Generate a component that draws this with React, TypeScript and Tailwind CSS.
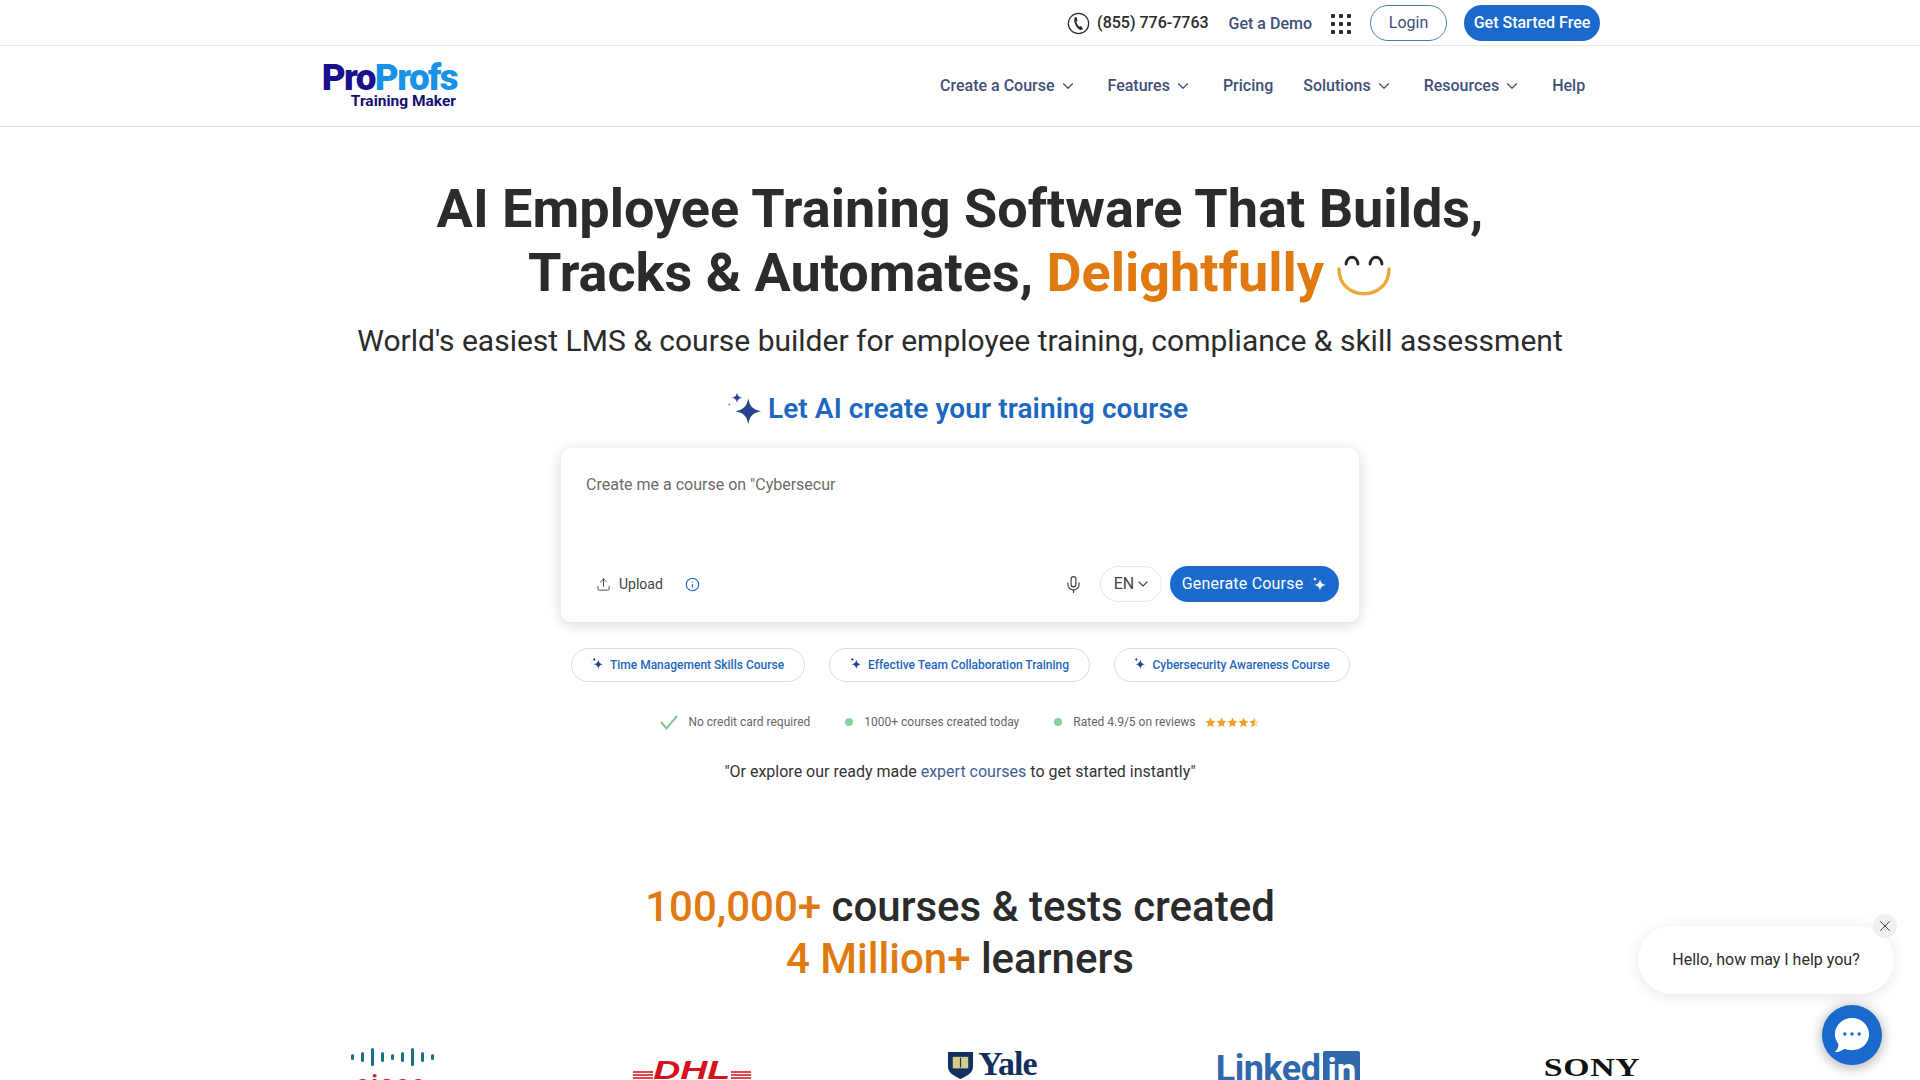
import { ChevronDown, Info, Mic, Upload, X } from "lucide-react";

const navItems = [
  { label: "Create a Course", menu: true, className: "mr-[31px]" },
  { label: "Features", menu: true, className: "mr-[31px]" },
  { label: "Pricing", menu: false, className: "mr-[30px]" },
  { label: "Solutions", menu: true, className: "mr-[31px]" },
  { label: "Resources", menu: true, className: "mr-[31px]" },
  { label: "Help", menu: false, className: "" },
];

function Sparkle({ className }: { className?: string }) {
  return (
    <svg viewBox="0 0 24 24" className={className} fill="currentColor">
      <path d="M13.5 5 C14.6 10.4 16.6 12.4 22 13.5 C16.6 14.6 14.6 16.6 13.5 22 C12.4 16.6 10.4 14.6 5 13.5 C10.4 12.4 12.4 10.4 13.5 5 Z" />
      <path d="M6 1 C6.4 3.2 7.3 4.1 9.5 4.5 C7.3 4.9 6.4 5.8 6 8 C5.6 5.8 4.7 4.9 2.5 4.5 C4.7 4.1 5.6 3.2 6 1 Z" />
      <circle cx="0.8" cy="9" r="0.5" />
    </svg>
  );
}

function PhoneIcon() {
  return (
    <svg viewBox="0 0 24 24" className="h-[23px] w-[23px] text-[#2b2b2b]" fill="none">
      <circle cx="12" cy="12" r="10.6" stroke="currentColor" strokeWidth="1.3" />
      <path
        d="M8 5.8 L10 5.3 L11 9 L9.7 10 C10 12 11.4 14.3 13 15.4 L14.5 14.5 L16.8 17.4 L15.3 18.6 C13.8 19.5 11.6 18 9.9 15.5 C8 12.8 6.8 8.4 8 5.8 Z"
        fill="currentColor"
      />
    </svg>
  );
}

function AppsGrid() {
  return (
    <div className="grid grid-cols-3 gap-[4px]">
      {Array.from({ length: 9 }).map((_, i) => (
        <span key={i} className="h-[4px] w-[4px] rounded-[1px] bg-[#2b2b2b]" />
      ))}
    </div>
  );
}

function Smile() {
  return (
    <svg viewBox="0 0 56 46" className="ml-[12px] mt-[2px] h-[46px] w-[56px]" fill="none" strokeLinecap="round">
      <path d="M3 18 C3 51 53 51 53 18" stroke="#eba83a" strokeWidth="3.4" />
      <path d="M10 13 C11 4 21 4 22 13" stroke="#222" strokeWidth="2.8" />
      <path d="M34 13 C35 4 45 4 46 13" stroke="#222" strokeWidth="2.8" />
    </svg>
  );
}

function Star({ half }: { half?: boolean }) {
  const shape = "M6 .6 L7.6 4.1 L11.4 4.5 L8.6 7.1 L9.4 10.9 L6 9 L2.6 10.9 L3.4 7.1 L.6 4.5 L4.4 4.1 Z";
  return (
    <svg viewBox="0 0 12 12" className="h-[11px] w-[11px]">
      <path d={shape} fill={half ? "#f6dcae" : "#f0a024"} />
      {half && <path d="M6 .6 L4.4 4.1 L.6 4.5 L3.4 7.1 L2.6 10.9 L6 9 Z" fill="#f0a024" />}
    </svg>
  );
}

function Stars() {
  return (
    <div className="ml-[9px] flex">
      <Star />
      <Star />
      <Star />
      <Star />
      <Star half />
    </div>
  );
}

function Chip({ label, className }: { label: string; className: string }) {
  return (
    <div
      className={`flex h-[34px] items-center justify-center gap-[6px] rounded-full border border-[#d9dce0] bg-white text-[12px] font-medium text-[#1d67c0] ${className}`}
    >
      <Sparkle className="mb-[3px] h-[13px] w-[13px] text-[#25438f]" />
      {label}
    </div>
  );
}

function CiscoLogo() {
  const bars = [6, 10, 18, 10, 6, 10, 18, 10, 6];
  return (
    <div className="flex flex-col items-center">
      <div className="flex h-[18px] items-center gap-[7px]">
        {bars.map((h, i) => (
          <span key={i} style={{ height: h }} className="w-[3px] rounded-full bg-[#1c6f86]" />
        ))}
      </div>
      <span className="mt-[4px] text-[24px] font-bold leading-[28px] tracking-[3px] text-[#c8202f]">cisco</span>
    </div>
  );
}

function Stripes() {
  return (
    <div className="mb-[4px] flex w-[20px] flex-col gap-[1px]">
      <span className="h-[2px] bg-[#e0474d]" />
      <span className="h-[2px] bg-[#e0474d]" />
      <span className="h-[2px] bg-[#e0474d]" />
    </div>
  );
}

function DhlLogo() {
  return (
    <div className="mt-[9px] flex h-[26px] items-end self-start">
      <Stripes />
      <div className="flex w-[78px] justify-center">
        <span className="font-['Liberation_Sans',sans-serif] text-[25px] font-bold italic leading-[26px] text-[#d5111b] [transform:scaleX(1.5)]">
          DHL
        </span>
      </div>
      <Stripes />
    </div>
  );
}

function YaleLogo() {
  return (
    <div className="flex items-start gap-[4px]">
      <svg viewBox="0 0 28 30" className="mt-[3px] h-[29px] w-[27px]">
        <path d="M1 1 H27 V16 C27 23 20 26 14 29 C8 26 1 23 1 16 Z" fill="#12305f" />
        <rect x="6" y="6" width="16" height="12" fill="#d6c98a" />
        <path d="M14 7 V17" stroke="#12305f" strokeWidth="1.2" />
      </svg>
      <span className="font-['Liberation_Serif',serif] text-[34px] font-bold leading-[32px] tracking-[-1px] text-[#12305f]">
        Yale
      </span>
    </div>
  );
}

function LinkedinLogo() {
  return (
    <div className="mr-[8px] mt-[1px] flex items-start gap-[3px]">
      <span className="text-[36px] font-bold leading-[40px] tracking-[-0.5px] text-[#3068ac]">Linked</span>
      <span className="mt-[2px] rounded-[2px] bg-[#3068ac] px-[4px] text-[35px] font-bold leading-[42px] text-white">
        in
      </span>
    </div>
  );
}

function SonyLogo() {
  return (
    <span className="mt-[6px] font-['Liberation_Serif',serif] text-[26px] font-bold leading-[28px] tracking-[0.5px] text-[#111] [transform:scaleX(1.3)]">
      SONY
    </span>
  );
}

export default function App() {
  return (
    <div className="relative h-[1080px] w-full overflow-hidden bg-white font-['Roboto',sans-serif] text-[#2b2b2b]">
      <div className="h-[46px] border-b border-[#e6e6e6] pt-[5px]">
        <div className="flex h-[36px] items-center justify-end pr-[320px]">
          <PhoneIcon />
          <span className="ml-[7px] text-[16px] font-medium">(855) 776-7763</span>
          <span className="ml-[20px] mt-[1px] text-[16px] font-medium text-[#3f5078]">Get a Demo</span>
          <div className="ml-[19px] mt-[1px]">
            <AppsGrid />
          </div>
          <button className="ml-[19px] h-[36px] w-[77px] rounded-full border border-[#4b7fa8] text-[16px] text-[#3f5078]">
            Login
          </button>
          <button className="ml-[17px] h-[36px] w-[136px] rounded-full bg-[#1a69cc] text-[16px] font-medium text-white">
            Get Started Free
          </button>
        </div>
      </div>

      <header className="flex h-[81px] items-center border-b border-[#dedede] pl-[322px]">
        <div className="flex w-[135px] flex-col items-end">
          <div className="whitespace-nowrap text-[36.8px] font-black leading-[30px] tracking-[-1.6px]">
            <span className="text-[#1a0f8c]">Pro</span>
            <span className="text-[#1792e8]">Profs</span>
          </div>
          <div className="mr-[1px] text-[15.5px] font-bold leading-[16px] text-[#150f6e]">Training Maker</div>
        </div>
        <nav className="ml-[483px] flex items-center text-[16px] font-medium text-[#3f5078]">
          {navItems.map((item) => (
            <div key={item.label} className={`flex items-center ${item.className}`}>
              {item.label}
              {item.menu && <ChevronDown className="ml-[4px] h-[18px] w-[18px]" strokeWidth={1.6} />}
            </div>
          ))}
        </nav>
      </header>

      <main className="flex flex-col items-center pt-[50px]">
        <h1 className="text-center text-[54px] font-bold leading-[64px] text-[#2b2b2b]">
          AI Employee Training Software That Builds,
          <span className="flex items-center justify-center">
            Tracks &amp; Automates,&nbsp;<span className="text-[#e07a10]">Delightfully</span>
            <Smile />
          </span>
        </h1>
        <p className="mt-[14px] text-[30px] leading-[44px]">
          World's easiest LMS &amp; course builder for employee training, compliance &amp; skill assessment
        </p>

        <div className="mr-[4px] mt-[24px] flex h-[44px] items-center gap-[4px] text-[#1d67c0]">
          <Sparkle className="h-[36px] w-[36px] text-[#25438f]" />
          <span className="text-[28px] font-semibold leading-[44px] tracking-[0.1px]">
            Let AI create your training course
          </span>
        </div>

        <div className="mt-[17px] flex h-[174px] w-[798px] flex-col rounded-[10px] bg-white pb-[20px] pl-[21px] pr-[20px] pt-[26px] shadow-[0_2px_14px_rgba(0,0,0,0.16)]">
          <div className="pl-[4px] text-[16px] leading-[22px] text-[#6b6b6b]">Create me a course on "Cybersecur</div>
          <div className="mt-auto flex items-center">
            <Upload className="ml-[14px] h-[15px] w-[15px] text-[#444]" strokeWidth={1.5} />
            <span className="ml-[8px] text-[14px] text-[#444]">Upload</span>
            <Info className="ml-[22px] h-[15px] w-[15px] text-[#1d67c0]" strokeWidth={1.8} />
            <Mic className="ml-auto h-[19px] w-[19px] text-[#444]" strokeWidth={1.5} />
            <div className="ml-[17px] flex h-[36px] w-[62px] items-center justify-center rounded-full border border-[#e6e6e6] pl-[3px] text-[16px] text-[#444]">
              EN
              <ChevronDown className="ml-[1px] h-[16px] w-[16px]" strokeWidth={1.6} />
            </div>
            <button className="ml-[8px] flex h-[36px] w-[169px] items-center justify-center gap-[8px] rounded-full bg-[#1a69cc] text-[16px] tracking-[0.2px] text-white">
              Generate Course
              <Sparkle className="h-[16px] w-[16px]" />
            </button>
          </div>
        </div>

        <div className="mt-[26px] flex gap-[24px]">
          <Chip label="Time Management Skills Course" className="w-[234px]" />
          <Chip label="Effective Team Collaboration Training" className="w-[261px]" />
          <Chip label="Cybersecurity Awareness Course" className="w-[236px]" />
        </div>

        <div className="mt-[31px] flex h-[18px] items-center text-[12px] text-[#666]">
          <svg viewBox="0 0 18 16" className="h-[16px] w-[18px]" fill="none">
            <path d="M1 8 L6.5 14.5 L17 2" stroke="#7fc79a" strokeWidth="2" />
          </svg>
          <span className="ml-[10px]">No credit card required</span>
          <span className="ml-[35px] h-[8px] w-[8px] rounded-full bg-[#8ccf9f]" />
          <span className="ml-[11px]">1000+ courses created today</span>
          <span className="ml-[35px] h-[8px] w-[8px] rounded-full bg-[#8ccf9f]" />
          <span className="ml-[11px]">Rated 4.9/5 on reviews</span>
          <Stars />
        </div>

        <p className="mt-[30px] text-[16px] leading-[22px] text-[#333]">
          "Or explore our ready made <span className="text-[#3f5f95]">expert courses</span> to get started instantly"
        </p>

        <div className="mt-[98px] text-center text-[42px] font-medium leading-[52px] text-[#2b2b2b]">
          <div>
            <span className="text-[#e07a10]">100,000+</span> courses &amp; tests created
          </div>
          <div>
            <span className="text-[#e07a10]">4 Million+</span> learners
          </div>
        </div>

        <div className="ml-[64px] mt-[63px] flex w-[1500px]">
          <div className="flex w-[300px] justify-center">
            <CiscoLogo />
          </div>
          <div className="flex w-[300px] justify-center">
            <DhlLogo />
          </div>
          <div className="flex w-[300px] justify-center">
            <YaleLogo />
          </div>
          <div className="flex w-[300px] justify-center">
            <LinkedinLogo />
          </div>
          <div className="flex w-[300px] justify-center">
            <SonyLogo />
          </div>
        </div>
      </main>

      <div className="absolute left-[1638px] top-[926px] flex h-[68px] w-[256px] items-center justify-center rounded-[34px] bg-white text-[16px] text-[#2b2b2b] shadow-[0_2px_16px_rgba(0,0,0,0.1)]">
        Hello, how may I help you?
      </div>
      <div className="absolute left-[1873px] top-[914px] flex h-[24px] w-[24px] items-center justify-center rounded-full bg-[#f0f0f0] text-[#333]">
        <X className="h-[18px] w-[18px]" strokeWidth={1.2} />
      </div>
      <div className="absolute left-[1822px] top-[1005px] flex h-[60px] w-[60px] items-center justify-center rounded-full bg-[#1a69cc] shadow-[0_2px_14px_rgba(0,0,0,0.35)]">
        <svg viewBox="0 0 40 40" className="h-[38px] w-[38px]">
          <path d="M20 2 C30 2 38 10 38 19 C38 29 30 36 20 36 C17 36 14 35.5 12 34.5 C9 37 6 38 2 38 C5 35.5 6 32 5.5 29 C3 26 2 23 2 19 C2 10 10 2 20 2 Z" fill="white" />
          <circle cx="12.5" cy="19" r="1.8" fill="#1a69cc" />
          <circle cx="20" cy="19" r="1.8" fill="#1a69cc" />
          <circle cx="27.5" cy="19" r="1.8" fill="#1a69cc" />
        </svg>
      </div>
    </div>
  );
}
